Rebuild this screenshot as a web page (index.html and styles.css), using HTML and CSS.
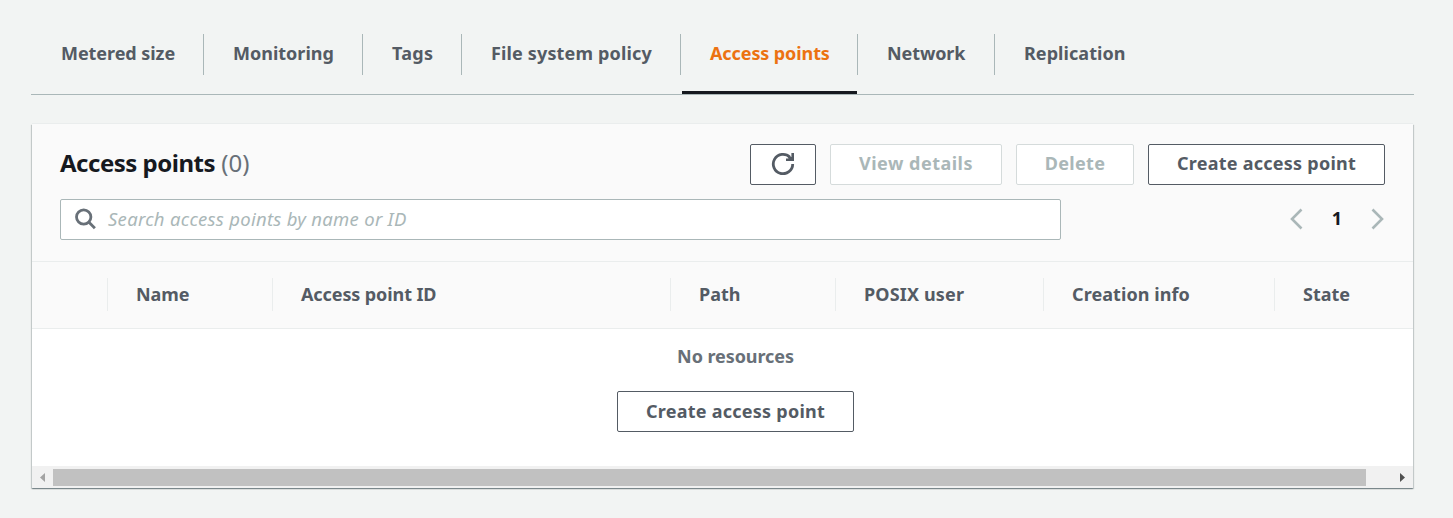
FILE: index.html
```html
<!DOCTYPE html>
<html lang="en">
<head>
<meta charset="utf-8">
<title>Access points</title>
<link rel="stylesheet" href="styles.css">
</head>
<body>
<nav class="tabs">
  <a class="tab t-metered"><span>Metered size</span></a>
  <a class="tab t-monitoring"><span>Monitoring</span></a>
  <a class="tab t-tags"><span>Tags</span></a>
  <a class="tab t-policy"><span>File system policy</span></a>
  <a class="tab t-access active"><span>Access points</span></a>
  <a class="tab t-network"><span>Network</span></a>
  <a class="tab t-replication"><span>Replication</span></a>
</nav>
<main class="panel">
  <header class="panel-header">
    <div class="title-row">
      <h2 class="title"><span class="title-text">Access points</span> <span class="count">(0)</span></h2>
      <div class="actions">
        <button class="btn refresh" aria-label="Refresh">
          <svg width="24" height="24" viewBox="0 0 24 24" fill="none" stroke="#545b64" stroke-width="2.8"><path d="M21.700 13A9.700 9.700 0 1 1 18.900 6.200"/><path d="M20.400 2H23v8h-8V7.500h2.500L17 5l3.400 1z" fill="#545b64" stroke="none"/></svg>
        </button>
        <button class="btn view" disabled><span class="view-label">View details</span></button>
        <button class="btn delete" disabled><span class="delete-label">Delete</span></button>
        <button class="btn create"><span class="create-label">Create access point</span></button>
      </div>
    </div>
    <div class="filter-row">
      <label class="search">
        <svg width="22" height="22" viewBox="0 0 22 22" fill="none" stroke="#687078" stroke-width="2.8"><circle cx="8.700" cy="9" r="7.200"/><path d="M13.700 14l6.200 6.200"/></svg>
        <span class="placeholder">Search access points by name or ID</span>
      </label>
      <div class="pager">
        <svg width="13" height="22" viewBox="0 0 13 22" fill="none" stroke="#aab7b8" stroke-width="2.6"><path d="M11.500 1.500L2 11l9.500 9.500"/></svg>
        <b class="page">1</b>
        <svg width="13" height="22" viewBox="0 0 13 22" fill="none" stroke="#aab7b8" stroke-width="2.6"><path d="M1.500 1.500L11 11l-9.500 9.500"/></svg>
      </div>
    </div>
  </header>
  <div class="columns">
    <div class="col"></div>
    <div class="col c-name"><span>Name</span></div>
    <div class="col c-id"><span>Access point ID</span></div>
    <div class="col c-path"><span>Path</span></div>
    <div class="col c-posix"><span>POSIX user</span></div>
    <div class="col c-info"><span>Creation info</span></div>
    <div class="col c-state"><span>State</span></div>
  </div>
  <div class="empty">
    <p class="empty-text"><span>No resources</span></p>
    <button class="btn create"><span class="create-label">Create access point</span></button>
  </div>
  <div class="scrollbar">
    <svg width="21" height="21" viewBox="0 0 21 21"><path d="M8 11.500L13 7v9z" fill="#a3a3a3"/></svg>
    <div class="thumb"></div>
    <svg class="arrow-right" width="21" height="21" viewBox="0 0 21 21"><path d="M13 11.500L8 7v9z" fill="#505050"/></svg>
  </div>
</main>
</body>
</html>
```
FILE: styles.css
```css
* { box-sizing: border-box; }
body {
  margin: 0;
  height: 518px;
  padding: 34px 39px 0 31px;
  background: #f2f4f3;
  color: #545b64;
  font: 700 18px/24px "Noto Sans", "Open Sans", sans-serif;
  overflow: hidden;
}
.tabs {
  display: grid;
  grid-template-columns: 173px 159px 99px 219px 177px 137px 1fr;
  height: 61px;
  border-bottom: 1px solid #aab7b8;
}
.tab {
  height: 41px;
  padding: 7px 0 0 29px;
  border-right: 1px solid #aab7b8;
  white-space: nowrap;
}
.t-metered { padding-left: 30px; letter-spacing: -.06px; }
.t-tags { letter-spacing: .3px; }
.t-policy { letter-spacing: .15px; }
.t-access, .t-network { letter-spacing: -.1px; }
.t-replication { letter-spacing: .06px; }
.tab:last-child { border-right: 0; }
.active { color: #ec7211; position: relative; }
.active::after {
  content: "";
  position: absolute;
  left: 1px;
  right: 0;
  top: 57px;
  height: 3px;
  background: #16191f;
}
.panel {
  width: 1381px;
  height: 364px;
  margin: 29px 0 0 1px;
  background: #fff;
  box-shadow: 0 1px 1px 0 rgba(0, 28, 36, .3), 1px 1px 1px 0 rgba(0, 28, 36, .15), -1px 1px 1px 0 rgba(0, 28, 36, .15), 0 -1px 0 #eaeded;
}
.panel-header {
  height: 138px;
  padding: 20px 28px 0;
  background: #fafafa;
  border-bottom: 1px solid #eaeded;
}
.title-row, .filter-row {
  display: flex;
  justify-content: space-between;
  height: 41px;
}
.title {
  margin: 0;
  font-size: 24px;
  line-height: 37px;
  font-weight: 700;
  color: #16191f;
  white-space: nowrap;
}
.title-text { letter-spacing: -.5px; }
.count { color: #687078; font-weight: 400; }
.actions { display: flex; gap: 14px; }
.btn {
  display: flex;
  align-items: center;
  justify-content: center;
  height: 41px;
  padding: 0 0 3px;
  background: #fff;
  border: 1px solid #545b64;
  border-radius: 2px;
  color: #545b64;
  font: inherit;
  white-space: nowrap;
}
.btn:disabled { color: #aab7b8; border-color: #d5dbdb; }
.refresh { width: 66px; }
.view { width: 172px; letter-spacing: .5px; }
.delete { width: 118px; letter-spacing: .35px; }
.create { width: 237px; letter-spacing: .25px; }
.filter-row { margin-top: 14px; }
.search {
  display: flex;
  align-items: center;
  gap: 11px;
  width: 1001px;
  padding: 0 0 1px 14px;
  background: #fff;
  border: 1px solid #aab7b8;
  border-radius: 2px;
}
.placeholder {
  padding-bottom: 1px;
  color: #aab7b8;
  font-size: 18.5px;
  font-style: italic;
  font-weight: 400;
  letter-spacing: .28px;
}
.pager {
  display: flex;
  align-items: center;
  justify-content: space-between;
  width: 95px;
  padding: 0 1px 1px 0;
  color: #16191f;
}
.page { font-weight: 700; padding-bottom: 2px; }
.columns {
  display: grid;
  grid-template-columns: 76px 165px 398px 165px 208px 231px 1fr;
  height: 67px;
  padding-top: 16px;
  background: #fafafa;
  border-bottom: 1px solid #eaeded;
}
.col {
  height: 33px;
  padding: 4px 0 0 28px;
  border-right: 1px solid #eaeded;
  white-space: nowrap;
}
.c-name, .c-id { letter-spacing: -.1px; }
.c-posix { letter-spacing: .15px; }
.c-info { letter-spacing: .08px; }
.col:last-child { border-right: 0; }
.empty {
  display: flex;
  flex-direction: column;
  align-items: center;
  height: 137px;
  padding: 15px 0 0 26px;
}
.empty-text { margin: 0 0 23px; color: #687078; letter-spacing: -.08px; }
.empty .btn { padding-bottom: 1px; }
.scrollbar {
  display: flex;
  height: 22px;
  background: #f1f1f1;
}
.thumb { width: 1313px; height: 17px; margin-top: 3px; background: #c1c1c1; }
.arrow-right { margin-left: 26px; }
```
